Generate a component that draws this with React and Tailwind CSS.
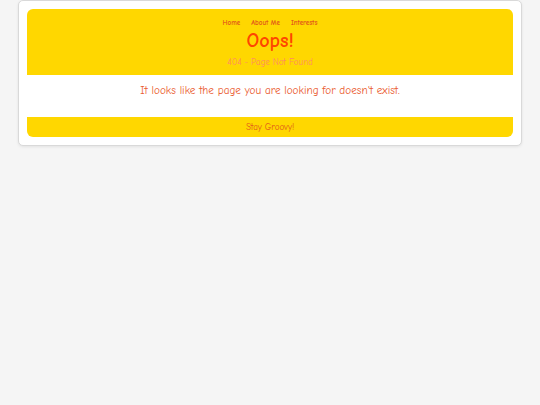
export default function App() {
  return (
    <div className="min-h-[405px] w-full bg-[#f5f5f5] px-[18px] font-['Comic_Sans_MS','Comic_Neue',cursive]">
      <div className="bg-white border border-[#d9d9d9] rounded-[5px] p-2 shadow-[0_1px_3px_rgba(0,0,0,0.08)]">
        <header className="bg-[#ffd700] rounded-t-[6px] flex flex-col items-center pt-[9px] pb-[6px]">
          <nav className="flex gap-[11px] text-[7px] font-bold text-[#e2571b] leading-[10px]">
            <a>Home</a>
            <a>About Me</a>
            <a>Interests</a>
          </nav>
          <h1 className="text-[20px] font-bold text-[#ff4500] leading-[26px]">Oops!</h1>
          <p className="text-[9px] text-[#ff8a65] leading-[14px] mt-[1px]">404 - Page Not Found</p>
        </header>
        <main className="text-center pt-[8px] pb-[18px]">
          <p className="text-[11.2px] text-[#ea5a2e] leading-[16px]">It looks like the page you are looking for doesn't exist.</p>
        </main>
        <footer className="bg-[#ffd700] rounded-b-[6px] text-center text-[9px] text-[#e2571b] leading-[20px]">
          Stay Groovy!
        </footer>
      </div>
    </div>
  )
}
